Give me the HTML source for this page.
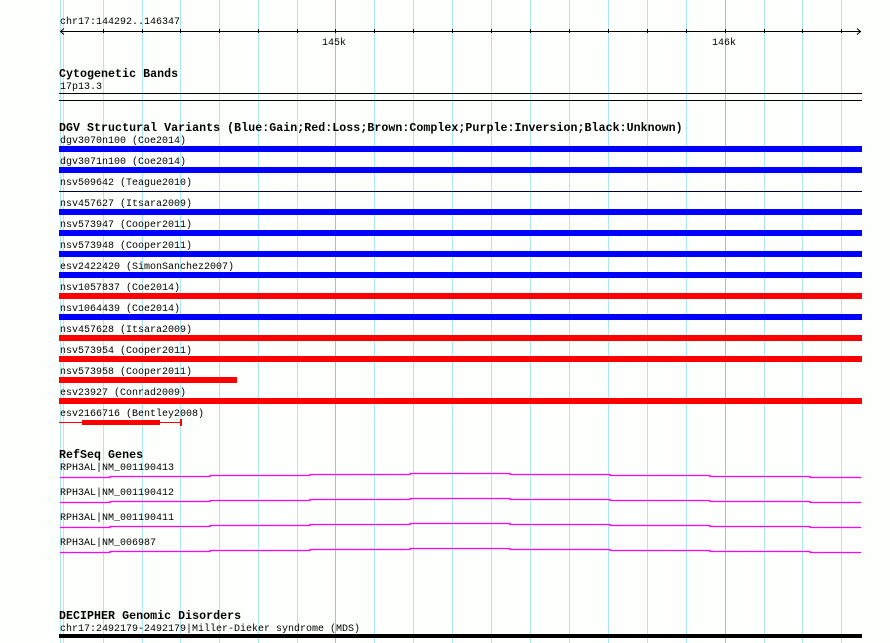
<!DOCTYPE html>
<html><head><meta charset="utf-8"><style>
html,body{margin:0;padding:0;background:#fdfffd;width:890px;height:643px;overflow:hidden}
.t{position:absolute;font-family:"Liberation Mono",monospace;font-size:10px;line-height:11px;color:#000;white-space:pre}
.b{font-weight:bold;font-size:11.6px;letter-spacing:0.05px}
svg{position:absolute;left:0;top:0}
</style></head><body>
<svg width="890" height="643">
<g stroke="#aee8ee" stroke-width="1">
<line x1="60.5" y1="0" x2="60.5" y2="643"/><line x1="63.5" y1="0" x2="63.5" y2="643"/>
<line x1="103.5" y1="0" x2="103.5" y2="643"/><line x1="142.5" y1="0" x2="142.5" y2="643"/>
<line x1="180.5" y1="0" x2="180.5" y2="643"/><line x1="219.5" y1="0" x2="219.5" y2="643"/>
<line x1="258.5" y1="0" x2="258.5" y2="643"/><line x1="297.5" y1="0" x2="297.5" y2="643"/>
<line x1="374.5" y1="0" x2="374.5" y2="643"/><line x1="413.5" y1="0" x2="413.5" y2="643"/>
<line x1="452.5" y1="0" x2="452.5" y2="643"/><line x1="491.5" y1="0" x2="491.5" y2="643"/>
<line x1="530.5" y1="0" x2="530.5" y2="643"/><line x1="569.5" y1="0" x2="569.5" y2="643"/>
<line x1="608.5" y1="0" x2="608.5" y2="643"/><line x1="647.5" y1="0" x2="647.5" y2="643"/>
<line x1="686.5" y1="0" x2="686.5" y2="643"/><line x1="764.5" y1="0" x2="764.5" y2="643"/>
<line x1="802.5" y1="0" x2="802.5" y2="643"/><line x1="841.5" y1="0" x2="841.5" y2="643"/>
</g>
<g stroke="#8cc8e8"><line x1="335.5" y1="0" x2="335.5" y2="643"/><line x1="725.5" y1="0" x2="725.5" y2="643"/></g>
<g stroke="#000" stroke-width="1" fill="none">
<line x1="60" y1="31.5" x2="861" y2="31.5"/>
<polyline points="64,28.5 60.5,31.5 64,34.5"/>
<polyline points="857,28.5 860.5,31.5 857,34.5"/>
<path d="M103.5 29v4M142.5 29v4M180.5 29v4M219.5 29v4M258.5 29v4M297.5 29v4M335.5 29v4M374.5 29v4M413.5 29v4M452.5 29v4M491.5 29v4M530.5 29v4M569.5 29v4M608.5 29v4M647.5 29v4M686.5 29v4M725.5 29v4M764.5 29v4M802.5 29v4M841.5 29v4"/>
</g>
<rect x="59" y="93" width="803" height="1" fill="#000"/>
<rect x="59" y="100" width="803" height="1" fill="#000"/>
<rect x="59" y="146" width="803" height="6" fill="#0000ff"/>
<rect x="59" y="167" width="803" height="6" fill="#0000ff"/>
<rect x="59" y="191" width="803" height="1" fill="#000033"/>
<rect x="59" y="209" width="803" height="6" fill="#0000ff"/>
<rect x="59" y="230" width="803" height="6" fill="#0000ff"/>
<rect x="59" y="251" width="803" height="6" fill="#0000ff"/>
<rect x="59" y="272" width="803" height="6" fill="#0000ff"/>
<rect x="59" y="293" width="803" height="6" fill="#ff0000"/>
<rect x="59" y="314" width="803" height="6" fill="#0000ff"/>
<rect x="59" y="335" width="803" height="6" fill="#ff0000"/>
<rect x="59" y="356" width="803" height="6" fill="#ff0000"/>
<rect x="59" y="377" width="178" height="6" fill="#ff0000"/>
<rect x="59" y="398" width="803" height="6" fill="#ff0000"/>
<rect x="59" y="422" width="122" height="1" fill="#ff0000"/>
<rect x="82" y="420" width="78" height="5" fill="#ff0000"/>
<rect x="180" y="419" width="2" height="7" fill="#ff0000"/>
<g fill="none" stroke="#ff00ff" stroke-width="1.3">
<path d="M60 477.5H110V476.5H210V475.5H310V474.5H410V473.5H510V474.5H610V475.5H710V476.5H810V477.5H861"/>
<path d="M60 502.5H110V501.5H210V500.5H310V499.5H410V498.5H510V499.5H610V500.5H710V501.5H810V502.5H861"/>
<path d="M60 527.5H110V526.5H210V525.5H310V524.5H410V523.5H510V524.5H610V525.5H710V526.5H810V527.5H861"/>
<path d="M60 552.5H110V551.5H210V550.5H310V549.5H410V548.5H510V549.5H610V550.5H710V551.5H810V552.5H861"/>
</g>
<rect x="59" y="634" width="803" height="4" fill="#000"/>
</svg>
<div class="t" style="left:60px;top:17px">chr17:144292..146347</div>
<div class="t" style="left:322px;top:38px">145k</div>
<div class="t" style="left:712px;top:38px">146k</div>
<div class="t b" style="left:59px;top:69px">Cytogenetic Bands</div>
<div class="t" style="left:60px;top:82px">17p13.3</div>
<div class="t b" style="left:59px;top:123px">DGV Structural Variants (Blue:Gain;Red:Loss;Brown:Complex;Purple:Inversion;Black:Unknown)</div>
<div class="t" style="left:60px;top:136px">dgv3070n100 (Coe2014)</div>
<div class="t" style="left:60px;top:157px">dgv3071n100 (Coe2014)</div>
<div class="t" style="left:60px;top:178px">nsv509642 (Teague2010)</div>
<div class="t" style="left:60px;top:199px">nsv457627 (Itsara2009)</div>
<div class="t" style="left:60px;top:220px">nsv573947 (Cooper2011)</div>
<div class="t" style="left:60px;top:241px">nsv573948 (Cooper2011)</div>
<div class="t" style="left:60px;top:262px">esv2422420 (SimonSanchez2007)</div>
<div class="t" style="left:60px;top:283px">nsv1057837 (Coe2014)</div>
<div class="t" style="left:60px;top:304px">nsv1064439 (Coe2014)</div>
<div class="t" style="left:60px;top:325px">nsv457628 (Itsara2009)</div>
<div class="t" style="left:60px;top:346px">nsv573954 (Cooper2011)</div>
<div class="t" style="left:60px;top:367px">nsv573958 (Cooper2011)</div>
<div class="t" style="left:60px;top:388px">esv23927 (Conrad2009)</div>
<div class="t" style="left:60px;top:409px">esv2166716 (Bentley2008)</div>
<div class="t b" style="left:59px;top:450px">RefSeq Genes</div>
<div class="t" style="left:60px;top:463px">RPH3AL|NM_001190413</div>
<div class="t" style="left:60px;top:488px">RPH3AL|NM_001190412</div>
<div class="t" style="left:60px;top:513px">RPH3AL|NM_001190411</div>
<div class="t" style="left:60px;top:538px">RPH3AL|NM_006987</div>
<div class="t b" style="left:59px;top:611px">DECIPHER Genomic Disorders</div>
<div class="t" style="left:60px;top:624px">chr17:2492179-2492179|Miller-Dieker syndrome (MDS)</div>
</body></html>
